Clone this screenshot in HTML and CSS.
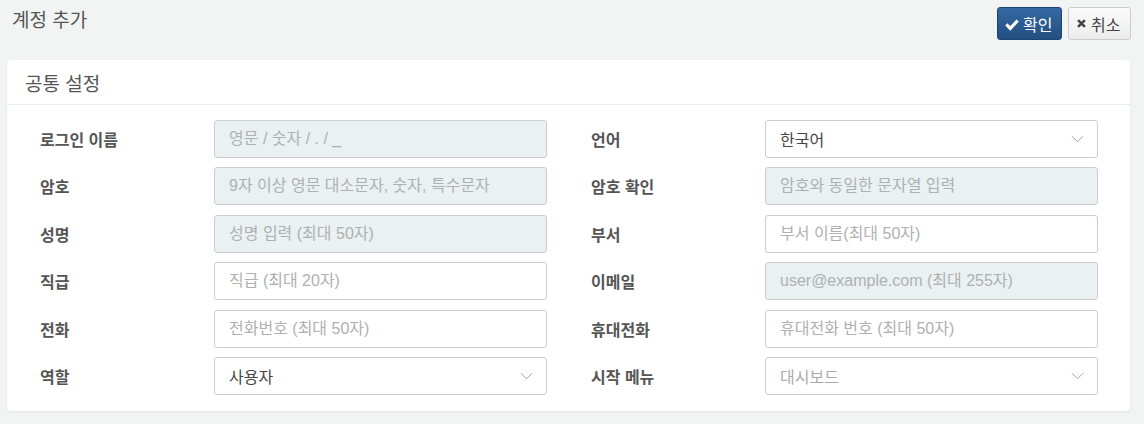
FILE: index.html
```html
<!DOCTYPE html>
<html lang="ko">
<head>
<meta charset="utf-8">
<link rel="stylesheet" href="styles.css">
</head>
<body>
<div class="page">
  <div class="topbar">
    <h1 class="title">계정 추가</h1>
    <div class="actions">
      <button class="btn btn-primary"><svg class="ico" viewBox="0 0 16 16" width="14" height="14"><path d="M1.5 8.5 L6 13 L14.5 4" fill="none" stroke="#fff" stroke-width="3.6" stroke-linejoin="miter"/></svg>확인</button>
      <button class="btn btn-default"><svg class="ico" viewBox="0 0 16 16" width="11" height="11"><path d="M3 3 L13 13 M13 3 L3 13" fill="none" stroke="#444" stroke-width="3.6"/></svg>취소</button>
    </div>
  </div>
  <div class="card">
    <div class="card-head">공통 설정</div>
    <div class="card-body">
      <div class="row"><label class="lbl">로그인 이름</label><input class="ctl ro" placeholder="영문 / 숫자 / . / _" readonly></div>
      <div class="row"><label class="lbl">언어</label><div class="sel"><span class="val">한국어</span><svg class="chev" viewBox="0 0 14 8" width="13" height="8"><path d="M1 1 L7 7 L13 1" fill="none" stroke="#999" stroke-width="1"/></svg></div></div>
      <div class="row"><label class="lbl">암호</label><input class="ctl ro" placeholder="9자 이상 영문 대소문자, 숫자, 특수문자" readonly></div>
      <div class="row"><label class="lbl">암호 확인</label><input class="ctl ro" placeholder="암호와 동일한 문자열 입력" readonly></div>
      <div class="row"><label class="lbl">성명</label><input class="ctl ro" placeholder="성명 입력 (최대 50자)" readonly></div>
      <div class="row"><label class="lbl">부서</label><input class="ctl" placeholder="부서 이름(최대 50자)"></div>
      <div class="row"><label class="lbl">직급</label><input class="ctl" placeholder="직급 (최대 20자)"></div>
      <div class="row"><label class="lbl">이메일</label><input class="ctl ro" placeholder="user@example.com (최대 255자)" readonly></div>
      <div class="row"><label class="lbl">전화</label><input class="ctl" placeholder="전화번호 (최대 50자)"></div>
      <div class="row"><label class="lbl">휴대전화</label><input class="ctl" placeholder="휴대전화 번호 (최대 50자)"></div>
      <div class="row"><label class="lbl">역할</label><div class="sel"><span class="val">사용자</span><svg class="chev" viewBox="0 0 14 8" width="13" height="8"><path d="M1 1 L7 7 L13 1" fill="none" stroke="#999" stroke-width="1"/></svg></div></div>
      <div class="row"><label class="lbl">시작 메뉴</label><div class="sel"><span class="val muted">대시보드</span><svg class="chev" viewBox="0 0 14 8" width="13" height="8"><path d="M1 1 L7 7 L13 1" fill="none" stroke="#999" stroke-width="1"/></svg></div></div>
    </div>
  </div>
</div>
</body>
</html>
```
FILE: styles.css
```css
* { box-sizing: border-box; }
html, body { margin: 0; padding: 0; }
body {
  background: #f2f4f4;
  font-family: "Liberation Sans", "Noto Sans CJK KR", sans-serif;
  color: #555;
  width: 1144px;
  height: 424px;
  overflow: hidden;
}
.page { padding: 7px 13px 0 7px; }
.topbar {
  display: flex;
  justify-content: space-between;
  align-items: flex-start;
  height: 53px;
}
.title {
  margin: 0;
  padding-left: 5px;
  font-size: 19px;
  font-weight: 400;
  line-height: 27px;
  color: #555;
}
.actions { display: flex; gap: 6px; padding-right: 0; }
.btn {
  display: flex;
  align-items: center;
  gap: 4px;
  height: 33px;
  padding: 0 6px 0 7px;
  font-family: "Liberation Sans", "Noto Sans CJK KR", sans-serif;
  font-size: 16px;
  border-radius: 3px;
  cursor: pointer;
}
.btn-primary {
  width: 65px;
  margin-left: 1px;
  color: #fff;
  background: linear-gradient(#3569a3, #234e80);
  border: 1px solid #1e4572;
}
.btn-default {
  width: 63px;
  color: #444;
  background: linear-gradient(#fbfbfb, #ececec);
  border: 1px solid #ccc;
}
.card {
  background: #fff;
  border-radius: 4px;
  box-shadow: 0 1px 3px rgba(0,0,0,0.08);
  width: 1123px;
}
.card-head {
  height: 45px;
  padding: 0 18px;
  display: flex;
  align-items: center;
  font-size: 19px;
  color: #555;
  border-bottom: 1px solid #e8ecec;
}
.card-body {
  padding: 15px 33px 16px 33px;
  display: grid;
  grid-template-columns: 507px 506px;
  column-gap: 44px;
  row-gap: 9.4px;
}
.row {
  display: grid;
  grid-template-columns: 174px 333px;
  align-items: center;
}
.lbl {
  font-size: 16px;
  font-weight: 700;
  color: #555;
}
.ctl {
  height: 38px;
  width: 333px;
  border: 1px solid #ccc;
  border-radius: 3px;
  padding: 0 14px;
  font-family: "Liberation Sans", "Noto Sans CJK KR", sans-serif;
  font-size: 16px;
  color: #555;
  background: #fff;
  outline: none;
}
.ctl.ro { background: #e9f1f3; }
.ctl::placeholder { color: #b0b0b0; }
.sel {
  height: 38px;
  width: 333px;
  border: 1px solid #ccc;
  border-radius: 3px;
  padding: 0 13px 0 14px;
  display: flex;
  align-items: center;
  justify-content: space-between;
  background: #fff;
}
.val { font-size: 16px; color: #444; }
.val.muted { color: #aaa; }
.chev { display: block; }
```
